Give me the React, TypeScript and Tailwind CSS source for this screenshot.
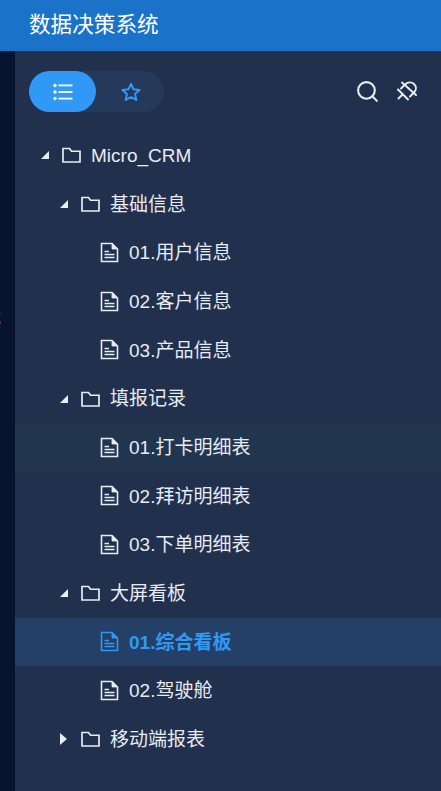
import { Search } from "lucide-react";

const font = "font-['Liberation_Sans','Noto_Sans_CJK_SC',sans-serif]";

type Row = {
  label: string;
  level: 0 | 1 | 2;
  kind: "open" | "closed" | "file";
  hover?: boolean;
  active?: boolean;
};

const rows: Row[] = [
  { label: "Micro_CRM", level: 0, kind: "open" },
  { label: "基础信息", level: 1, kind: "open" },
  { label: "01.用户信息", level: 2, kind: "file" },
  { label: "02.客户信息", level: 2, kind: "file" },
  { label: "03.产品信息", level: 2, kind: "file" },
  { label: "填报记录", level: 1, kind: "open" },
  { label: "01.打卡明细表", level: 2, kind: "file", hover: true },
  { label: "02.拜访明细表", level: 2, kind: "file" },
  { label: "03.下单明细表", level: 2, kind: "file" },
  { label: "大屏看板", level: 1, kind: "open" },
  { label: "01.综合看板", level: 2, kind: "file", active: true },
  { label: "02.驾驶舱", level: 2, kind: "file" },
  { label: "移动端报表", level: 1, kind: "closed" },
];

function FolderIcon() {
  return (
    <svg width="19" height="16" viewBox="0 0 19 16" fill="none" stroke="currentColor" strokeWidth="1.7" className="shrink-0">
      <path d="M1 15V1.5h6.5l2 2.75H18V15z" />
    </svg>
  );
}

function FileIcon() {
  return (
    <svg width="19" height="21" viewBox="0 0 19 21" fill="none" stroke="currentColor" strokeWidth="1.6" className="shrink-0">
      <path d="M1.5 1.5h10.5l5.5 5.5v12.5H1.5z" />
      <path d="M12 1.5v5.5h5.5" fill="currentColor" strokeWidth="0.8" />
      <path d="M4.5 9.5h4.5M4.5 12.5h10M4.5 15.5h10" />
    </svg>
  );
}

function ListIcon() {
  return (
    <svg width="20" height="18" viewBox="0 0 20 18" fill="white" className="shrink-0">
      <circle cx="2" cy="2.5" r="1.7" />
      <circle cx="2" cy="9" r="1.7" />
      <circle cx="2" cy="15.5" r="1.7" />
      <rect x="5.5" y="1.5" width="14" height="1.8" />
      <rect x="5.5" y="8.1" width="14" height="1.8" />
      <rect x="5.5" y="14.7" width="14" height="1.8" />
    </svg>
  );
}

function StarIcon() {
  return (
    <svg width="20" height="20" viewBox="0 0 20 20" fill="none" stroke="#3099f5" strokeWidth="2" strokeLinejoin="round">
      <path d="M10 1.8l2.5 5.5 6 .7-4.4 4.1 1.2 5.9-5.3-3-5.3 3 1.2-5.9L1.5 8l6-.7z" />
    </svg>
  );
}

// plug with a slash through it
function UnpinIcon() {
  return (
    <svg width="21" height="21" viewBox="0 0 21 21" fill="none" stroke="currentColor" strokeWidth="1.9" strokeLinecap="round">
      <path d="M2 8.5L12 18.5" />
      <path d="M5 7.5L9 3.5C12 .5 16 1 18 3C20.5 5.5 20.5 9 18 11.5L14 15.5" />
      <path d="M6 1.5L20 14" />
      <path d="M6.5 13.5L2.5 17.5" />
    </svg>
  );
}

function TreeRow({ row }: { row: Row }) {
  const indent = row.level === 0 ? "pl-[25px]" : row.level === 1 ? "pl-[44px]" : "pl-[85px]";
  const bg = row.active ? "bg-[#254066]" : row.hover ? "bg-[#22354f]" : "";
  const color = row.active ? "text-[#3099f5] font-bold" : "text-[#e8ecf3]";

  return (
    <div className={`flex h-[48.67px] items-center ${indent} ${bg} ${color}`}>
      {row.kind !== "file" && (
        <span className="flex w-[22px] shrink-0 items-center">
          {row.kind === "open" ? (
            <span className="ml-[1px] h-0 w-0 border-b-[8px] border-l-[8px] border-b-[#e8ecf3] border-l-transparent" />
          ) : (
            <span className="ml-[1px] h-0 w-0 border-y-[6px] border-l-[7px] border-y-transparent border-l-[#e8ecf3]" />
          )}
        </span>
      )}
      {row.kind === "file" ? <FileIcon /> : <FolderIcon />}
      <span className="ml-[10px] whitespace-nowrap pt-[2px] text-[19px]">{row.label}</span>
    </div>
  );
}

export default function App() {
  return (
    <div className={`flex h-[791px] w-[441px] flex-col overflow-hidden bg-[#21304d] ${font}`}>
      <header className="flex h-[51px] shrink-0 items-center bg-[#1a73c8] pl-[29px] text-[21.6px] text-white">
        数据决策系统
      </header>
      <div className="flex min-h-0 flex-1">
        <div className="relative w-[15px] shrink-0 bg-[#07142f]">
          {/* stray marks from the page behind the panel */}
          <span className="absolute left-0 top-[262px] h-[1px] w-[1px] bg-[#7a1f4d]" />
          <span className="absolute left-0 top-[270px] h-[3px] w-[1px] bg-[#7a1f4d]" />
        </div>
        <div className="min-w-0 flex-1">
          <div className="flex items-center justify-between pl-[14px] pr-[23px] pt-[20px]">
            <div className="flex h-[41px] w-[135px] rounded-full bg-[#25395b]">
              <div className="flex w-[67px] items-center justify-center rounded-full bg-[#3099f5]">
                <ListIcon />
              </div>
              <div className="flex flex-1 items-center justify-center pl-[2px]">
                <StarIcon />
              </div>
            </div>
            <div className="flex items-center gap-[17px] text-[#e8ecf3]">
              <Search size={25} strokeWidth={2} />
              <span className="-translate-x-[1px]">
                <UnpinIcon />
              </span>
            </div>
          </div>
          <div className="mt-[19px]">
            {rows.map((row) => (
              <TreeRow key={row.label} row={row} />
            ))}
          </div>
        </div>
      </div>
    </div>
  );
}
